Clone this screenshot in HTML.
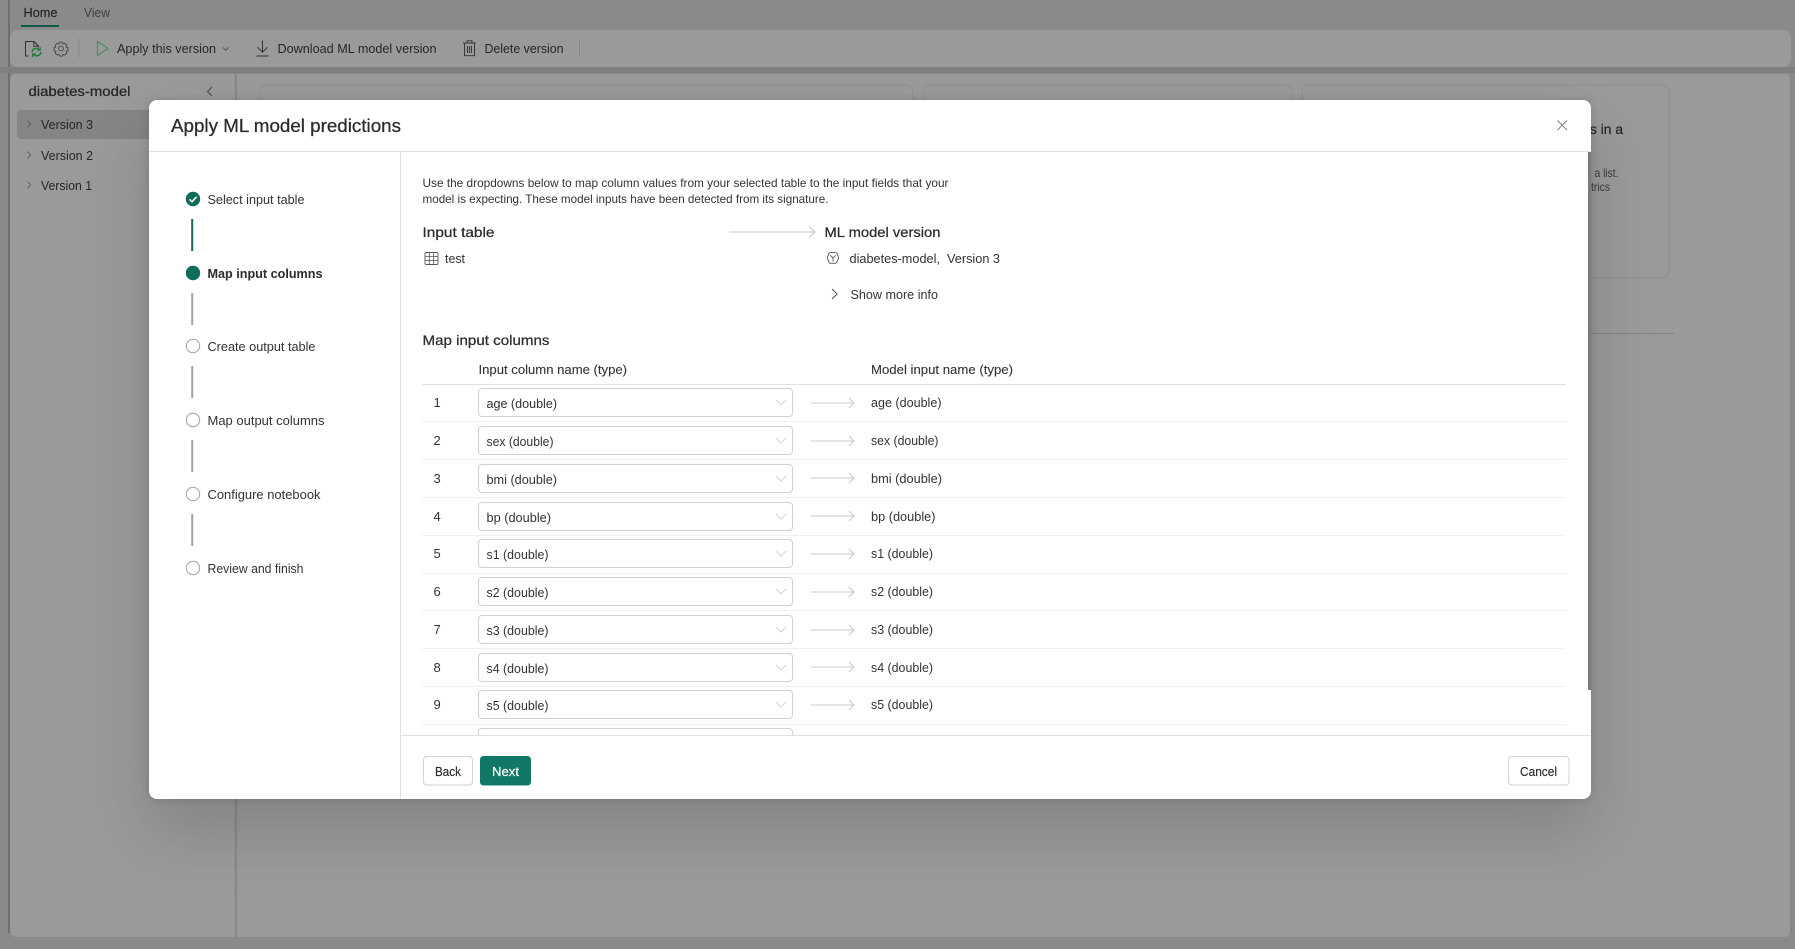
<!DOCTYPE html>
<html lang="en">
<head>
<meta charset="utf-8">
<title>Apply ML model predictions</title>
<style>
html,body{margin:0;padding:0;width:1795px;height:949px;overflow:hidden;background:#8a8a8a}
svg{position:absolute;left:0;top:0;display:block}
text{font-family:"Liberation Sans",sans-serif;font-size:13px;fill:#333}
.sb{stroke:#2b2b2b;stroke-width:.1px;paint-order:stroke}
.bg{fill:#262626;font-size:13px}
.p{font-size:12px}
.h{font-size:14px;fill:#2b2b2b;stroke:#2b2b2b;stroke-width:.25px}
#dlg{position:absolute;left:149px;top:100px;width:1442px;height:699px;background:#fff;border-radius:8px;box-shadow:0 32px 64px rgba(0,0,0,.15),0 0 8px rgba(0,0,0,.14)}
</style>
</head>
<body>
<svg width="1795" height="949" viewBox="0 0 1795 949" fill="none">
<rect width="1795" height="949" fill="#8a8a8a"/>
<rect x="8" y="0" width="2" height="933" fill="#6f6f6f"/>
<rect x="10" y="30" width="1781" height="37" rx="8" fill="#9a9a9a"/>
<rect x="0" y="67" width="1795" height="6" fill="#7f7f7f"/>
<rect x="10" y="74" width="1781" height="863" rx="7" fill="#9a9a9a"/>
<rect x="1790" y="74" width="1.5" height="860" fill="#858585"/>
<rect x="235" y="74" width="1.5" height="863" fill="#828282"/>
<rect x="17" y="110" width="140" height="29" rx="4" fill="#858585"/>

<text x="23.5" y="17" class="bg" textLength="34" lengthAdjust="spacingAndGlyphs" style="stroke:#1f1f1f;stroke-width:.15px">Home</text>
<text x="84" y="17" class="bg" textLength="26" lengthAdjust="spacingAndGlyphs" style="fill:#404040">View</text>
<rect x="21" y="25" width="38" height="2" fill="#0c5a4c"/>

<path d="M28.5 56h-3V41.5h8.5l4.5 4.5v1.5M33.8 41.5v4.7h4.7" stroke="#333" stroke-width="1"/>
<path d="M32 52a4.4 4.4 0 0 1 7.4-2.4M41 52a4.4 4.4 0 0 1-7.4 2.6" stroke="#1f7a3c" stroke-width="1.4"/>
<path d="M40.2 47.2v3h-3M32.6 57v-3h3" stroke="#1f7a3c" stroke-width="1.2"/>
<circle cx="61" cy="48.5" r="2.4" stroke="#444" stroke-width=".9"/>
<path d="M59.5 42.2h3l.6 1.8 1.7-.7 2.1 2.1-.8 1.7 1.8.6v3l-1.8.6.8 1.7-2.1 2.1-1.7-.8-.6 1.8h-3l-.6-1.8-1.7.8-2.1-2.1.8-1.7-1.8-.6v-3l1.8-.6-.8-1.7 2.1-2.1 1.7.7z" stroke="#444" stroke-width=".9" stroke-linejoin="round"/>
<rect x="78.5" y="39" width="1" height="18" fill="#878787"/>
<path d="M97.5 41.5L108 48.5 97.5 55.5z" stroke="#4c8a66" stroke-width="1.2" stroke-linejoin="round"/>
<text x="117" y="53" class="bg" textLength="99" lengthAdjust="spacingAndGlyphs">Apply this version</text>
<path d="M223 47.5l2.8 2.8 2.8-2.8" stroke="#555" stroke-width=".9"/>
<path d="M262.5 40.5v11.5M257.5 47.2l5 5 5-5M256.5 56h12" stroke="#333" stroke-width="1"/>
<text x="277.5" y="53" class="bg" textLength="159" lengthAdjust="spacingAndGlyphs">Download ML model version</text>
<path d="M463 43h13M467 43v-2.2h5V43M464.5 43v12.7h10V43M467.5 46v7M469.5 46v7M471.5 46v7" stroke="#333" stroke-width=".95"/>
<text x="484.5" y="53" class="bg" textLength="79" lengthAdjust="spacingAndGlyphs">Delete version</text>
<rect x="579" y="39" width="1" height="18" fill="#878787"/>

<text x="28.5" y="96" class="bg" textLength="102" lengthAdjust="spacingAndGlyphs" style="stroke:#262626;stroke-width:.25px;font-size:14px">diabetes-model</text>
<path d="M212 87l-4.5 4.5 4.5 4.5" stroke="#444" stroke-width=".9"/>
<path d="M27.5 120.5l3.2 3.5-3.2 3.5M27.5 151.5l3.2 3.5-3.2 3.5M27.5 181.5l3.2 3.5-3.2 3.5" stroke="#555" stroke-width=".8"/>
<text x="41" y="129" class="bg" textLength="52" lengthAdjust="spacingAndGlyphs">Version 3</text>
<text x="41" y="160" class="bg" textLength="52" lengthAdjust="spacingAndGlyphs">Version 2</text>
<text x="41" y="190" class="bg" textLength="51" lengthAdjust="spacingAndGlyphs">Version 1</text>

<rect x="260" y="85" width="653" height="193" rx="7" fill="#9a9a9a" stroke="#909090"/>
<rect x="923.5" y="85" width="368" height="193" rx="7" fill="#9a9a9a" stroke="#909090"/>
<rect x="1302" y="85" width="367" height="193" rx="7" fill="#9a9a9a" stroke="#8e8e8e"/>
<text x="1590" y="134" class="bg" textLength="33" lengthAdjust="spacingAndGlyphs" style="font-size:14px;stroke:#262626;stroke-width:.25px">s in a</text>
<text x="1594.5" y="177" class="bg" textLength="24" lengthAdjust="spacingAndGlyphs" style="font-size:12px;fill:#3a3a3a">a list.</text>
<text x="1591" y="191" class="bg" textLength="19" lengthAdjust="spacingAndGlyphs" style="font-size:12px;fill:#3a3a3a">trics</text>
<rect x="1500" y="333" width="174" height="1" fill="#828282"/>
</svg>

<div id="dlg"></div>

<svg width="1795" height="949" viewBox="0 0 1795 949" fill="none">
<rect x="149" y="151" width="1442" height="1" fill="#e0e0e0"/>
<rect x="400" y="152" width="1" height="647" fill="#e0e0e0"/>
<rect x="1588" y="152" width="3" height="538" fill="#7b7b7b"/>
<text x="171" y="132" textLength="230" lengthAdjust="spacingAndGlyphs" style="font-size:18px;fill:#2b2b2b;stroke:#2b2b2b;stroke-width:.25px">Apply ML model predictions</text>
<path d="M1557.5 120.5l9.5 9.5M1567 120.5l-9.5 9.5" stroke="#757575" stroke-width=".9"/>

<!-- stepper -->
<circle cx="193" cy="199" r="7.2" fill="#0f6c5a"/>
<path d="M189.5 199.3l2.5 2.5 4.6-5" stroke="#fff" stroke-width="1.5"/>
<rect x="191.2" y="219" width="2" height="32" fill="#0f6c5a"/>
<circle cx="193" cy="273" r="7.2" fill="#0f6c5a"/>
<rect x="191.2" y="293" width="2" height="32" fill="#a3a3a3"/>
<circle cx="193" cy="346" r="6.7" fill="#fff" stroke="#a3a3a3"/>
<rect x="191.2" y="366" width="2" height="32" fill="#a3a3a3"/>
<circle cx="193" cy="420" r="6.7" fill="#fff" stroke="#a3a3a3"/>
<rect x="191.2" y="440" width="2" height="32" fill="#a3a3a3"/>
<circle cx="193" cy="494" r="6.7" fill="#fff" stroke="#a3a3a3"/>
<rect x="191.2" y="514" width="2" height="32" fill="#a3a3a3"/>
<circle cx="193" cy="568" r="6.7" fill="#fff" stroke="#a3a3a3"/>
<text x="207.5" y="204" textLength="97" lengthAdjust="spacingAndGlyphs">Select input table</text>
<text x="207.5" y="278" textLength="115" lengthAdjust="spacingAndGlyphs" style="font-weight:700;fill:#2b2b2b">Map input columns</text>
<text x="207.5" y="351" textLength="108" lengthAdjust="spacingAndGlyphs">Create output table</text>
<text x="207.5" y="425" textLength="117" lengthAdjust="spacingAndGlyphs">Map output columns</text>
<text x="207.5" y="499" textLength="113" lengthAdjust="spacingAndGlyphs">Configure notebook</text>
<text x="207.5" y="573" textLength="96" lengthAdjust="spacingAndGlyphs">Review and finish</text>

<!-- intro -->
<text x="422.5" y="187" class="p" textLength="526" lengthAdjust="spacingAndGlyphs">Use the dropdowns below to map column values from your selected table to the input fields that your</text>
<text x="422.5" y="203" class="p" textLength="406" lengthAdjust="spacingAndGlyphs">model is expecting. These model inputs have been detected from its signature.</text>
<text x="422.5" y="237" class="h" textLength="72" lengthAdjust="spacingAndGlyphs">Input table</text>
<path d="M729 232h85M809 226.5l6 5.5-6 5.5" stroke="#c4c4c4" stroke-width="1"/>
<text x="824.5" y="237" class="h" textLength="116" lengthAdjust="spacingAndGlyphs">ML model version</text>
<rect x="425" y="252.5" width="13" height="12" rx="1.5" stroke="#555" stroke-width=".9"/>
<path d="M425 256.5h13M425 260.5h13M429.3 252.5v12M433.7 252.5v12" stroke="#555" stroke-width=".8"/>
<text x="445" y="263" textLength="20" lengthAdjust="spacingAndGlyphs">test</text>
<path d="M830.6 252.6h4.8a2 2 0 0 1 1.7 1l1.2 3.3a2.5 2.5 0 0 1 0 1.6l-1.4 3.6a2 2 0 0 1-1.7 1.2h-4.6a2 2 0 0 1-1.7-1.2l-1.4-3.6a2.5 2.5 0 0 1 0-1.6l1.2-3.3a2 2 0 0 1 1.9-1z" stroke="#555" stroke-width=".9"/>
<path d="M830.3 255.4l2.7 2.6 2.7-2.6M833 258v3.6" stroke="#555" stroke-width=".9"/>
<text x="849.5" y="263" textLength="150.5" lengthAdjust="spacingAndGlyphs">diabetes-model,&#160;&#160;Version 3</text>
<path d="M832 289l5.2 5-5.2 5" stroke="#444" stroke-width=".9"/>
<text x="850.5" y="299" textLength="87.5" lengthAdjust="spacingAndGlyphs">Show more info</text>
<text x="422.5" y="345" class="h" textLength="127" lengthAdjust="spacingAndGlyphs">Map input columns</text>
<text x="478.5" y="374" textLength="148.5" lengthAdjust="spacingAndGlyphs" class="sb">Input column name (type)</text>
<text x="871" y="374" textLength="142" lengthAdjust="spacingAndGlyphs" class="sb">Model input name (type)</text>
<rect x="422" y="384" width="1144" height="1" fill="#e0e0e0"/>

<!-- row separators -->
<g fill="#f0f0f0">
<rect x="422" y="421" width="1144" height="1"/>
<rect x="422" y="459" width="1144" height="1"/>
<rect x="422" y="497" width="1144" height="1"/>
<rect x="422" y="535" width="1144" height="1"/>
<rect x="422" y="573" width="1144" height="1"/>
<rect x="422" y="610" width="1144" height="1"/>
<rect x="422" y="648" width="1144" height="1"/>
<rect x="422" y="686" width="1144" height="1"/>
<rect x="422" y="724" width="1144" height="1"/>
</g>

<!-- dropdowns -->
<g fill="#fff" stroke="#d1d1d1">
<rect x="478.5" y="388.5" width="314" height="28" rx="3.5"/>
<rect x="478.5" y="426.5" width="314" height="28" rx="3.5"/>
<rect x="478.5" y="464.5" width="314" height="28" rx="3.5"/>
<rect x="478.5" y="502.5" width="314" height="28" rx="3.5"/>
<rect x="478.5" y="539.5" width="314" height="28" rx="3.5"/>
<rect x="478.5" y="577.5" width="314" height="28" rx="3.5"/>
<rect x="478.5" y="615.5" width="314" height="28" rx="3.5"/>
<rect x="478.5" y="653.5" width="314" height="28" rx="3.5"/>
<rect x="478.5" y="690.5" width="314" height="28" rx="3.5"/>
<path d="M478.5 735v-3a3.5 3.5 0 0 1 3.5-3.5h307a3.5 3.5 0 0 1 3.5 3.5v3"/>
</g>
<!-- chevrons -->
<g stroke="#d4d4d4" stroke-width="1">
<path d="M776 400l5 5 5-5"/><path d="M776 438l5 5 5-5"/><path d="M776 476l5 5 5-5"/><path d="M776 514l5 5 5-5"/><path d="M776 551l5 5 5-5"/><path d="M776 589l5 5 5-5"/><path d="M776 627l5 5 5-5"/><path d="M776 665l5 5 5-5"/><path d="M776 702l5 5 5-5"/>
</g>
<!-- arrows -->
<g stroke="#c8c8c8" stroke-width="1">
<path d="M811 403h43M849 398l5 5-5 5"/><path d="M811 441h43M849 436l5 5-5 5"/><path d="M811 478h43M849 473l5 5-5 5"/><path d="M811 516h43M849 511l5 5-5 5"/><path d="M811 554h43M849 549l5 5-5 5"/><path d="M811 592h43M849 587l5 5-5 5"/><path d="M811 630h43M849 625l5 5-5 5"/><path d="M811 667h43M849 662l5 5-5 5"/><path d="M811 705h43M849 700l5 5-5 5"/>
</g>

<text x="433.5" y="407">1</text><text x="433.5" y="445">2</text><text x="433.5" y="483">3</text><text x="433.5" y="521">4</text><text x="433.5" y="558">5</text><text x="433.5" y="596">6</text><text x="433.5" y="634">7</text><text x="433.5" y="672">8</text><text x="433.5" y="709">9</text>

<text x="486.5" y="408" textLength="70.5" lengthAdjust="spacingAndGlyphs">age (double)</text>
<text x="486.5" y="446" textLength="67" lengthAdjust="spacingAndGlyphs">sex (double)</text>
<text x="486.5" y="484" textLength="70.5" lengthAdjust="spacingAndGlyphs">bmi (double)</text>
<text x="486.5" y="522" textLength="64.5" lengthAdjust="spacingAndGlyphs">bp (double)</text>
<text x="486.5" y="559" textLength="62" lengthAdjust="spacingAndGlyphs">s1 (double)</text>
<text x="486.5" y="597" textLength="62" lengthAdjust="spacingAndGlyphs">s2 (double)</text>
<text x="486.5" y="635" textLength="62" lengthAdjust="spacingAndGlyphs">s3 (double)</text>
<text x="486.5" y="673" textLength="62" lengthAdjust="spacingAndGlyphs">s4 (double)</text>
<text x="486.5" y="710" textLength="62" lengthAdjust="spacingAndGlyphs">s5 (double)</text>

<text x="871" y="407" textLength="70.5" lengthAdjust="spacingAndGlyphs">age (double)</text>
<text x="871" y="445" textLength="67.5" lengthAdjust="spacingAndGlyphs">sex (double)</text>
<text x="871" y="483" textLength="71" lengthAdjust="spacingAndGlyphs">bmi (double)</text>
<text x="871" y="521" textLength="64.5" lengthAdjust="spacingAndGlyphs">bp (double)</text>
<text x="871" y="558" textLength="62" lengthAdjust="spacingAndGlyphs">s1 (double)</text>
<text x="871" y="596" textLength="62" lengthAdjust="spacingAndGlyphs">s2 (double)</text>
<text x="871" y="634" textLength="62" lengthAdjust="spacingAndGlyphs">s3 (double)</text>
<text x="871" y="672" textLength="62" lengthAdjust="spacingAndGlyphs">s4 (double)</text>
<text x="871" y="709" textLength="62" lengthAdjust="spacingAndGlyphs">s5 (double)</text>

<!-- footer -->
<rect x="401" y="735" width="1190" height="1" fill="#e0e0e0"/>
<rect x="423.5" y="756.5" width="49" height="28.5" rx="3.5" fill="#fff" stroke="#d1d1d1"/>
<text x="435" y="776" textLength="26" lengthAdjust="spacingAndGlyphs" style="font-size:12.5px;fill:#2b2b2b;stroke:#2b2b2b;stroke-width:.15px">Back</text>
<rect x="480" y="756" width="51" height="29.5" rx="3.5" fill="#117865"/>
<text x="492" y="776" textLength="27" lengthAdjust="spacingAndGlyphs" style="font-size:12.5px;fill:#fff;stroke:#fff;stroke-width:.2px">Next</text>
<rect x="1508.5" y="756.5" width="60.5" height="28.5" rx="3.5" fill="#fff" stroke="#d1d1d1"/>
<text x="1520" y="776" textLength="37" lengthAdjust="spacingAndGlyphs" style="font-size:12.5px;fill:#2b2b2b;stroke:#2b2b2b;stroke-width:.15px">Cancel</text>
</svg>
</body>
</html>
